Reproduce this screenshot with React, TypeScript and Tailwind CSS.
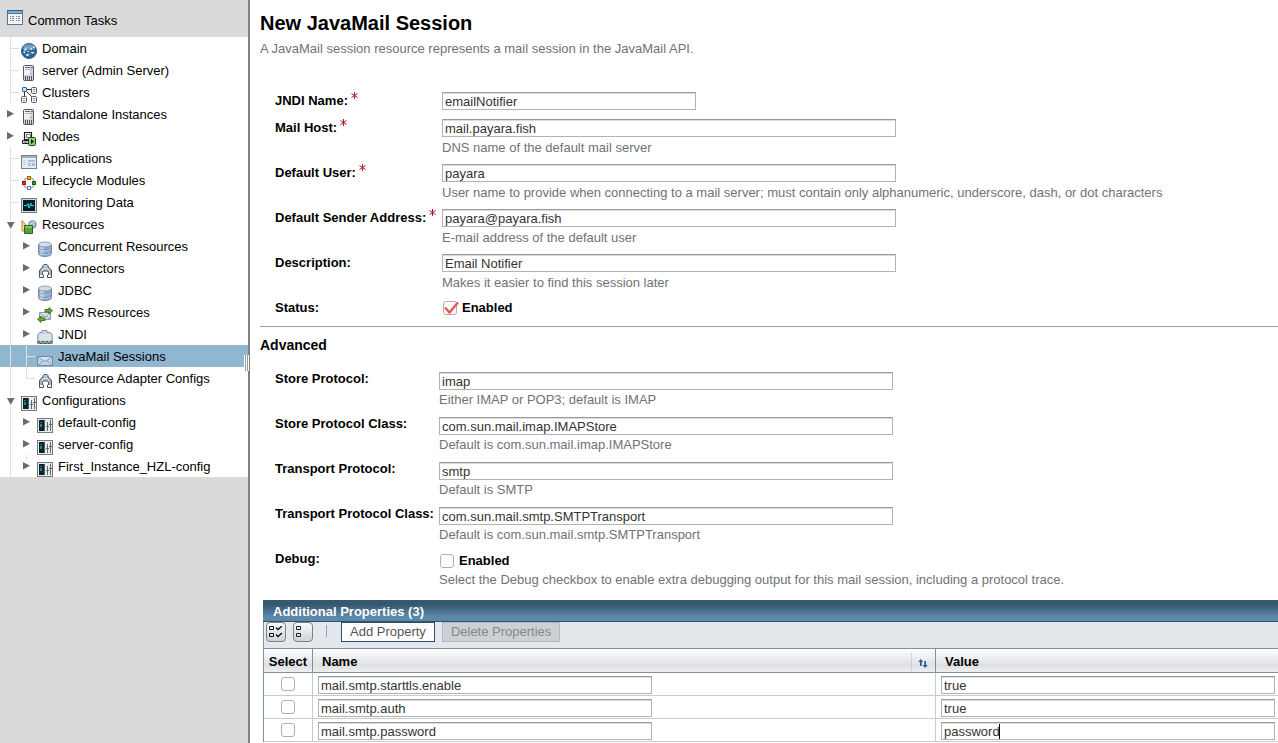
import React, { useState } from "react";

type IconName =
  | "globe" | "server" | "cluster" | "node" | "app" | "lifecycle" | "monitor"
  | "resources" | "database" | "connector" | "jms" | "jndi" | "mail" | "config";

function Icon({ name }: { name: IconName }) {
  return (
    <svg viewBox="0 0 16 16" className="size-4 shrink-0 self-end" aria-hidden="true">
      {name === "globe" && (
        <g>
          <circle cx="8" cy="8" r="7.600" fill="#2c6796" stroke="#234f74" strokeWidth=".8" />
          <path d="M1.500 6a6.800 6.800 0 0 1 13 0Q8 8 1.500 6Z" fill="#6c9cc2" />
          <path d="M5 4l5 1 2-2M5 4l-2 5 3 3 5-3 3 1" stroke="#8db6d4" strokeWidth=".6" fill="none" />
          <path d="M3.500 5.500h2v2h-2zM9.500 5H11v1.500H9.500zM2.500 8.500H4V10H2.500zM5.500 11h2v2h-2zM10.500 9h2v1.500h-2zM12 3.500h1.500V5H12zM6.500 8H8v1H6.500z" fill="#f1f7fb" />
        </g>
      )}
      {name === "server" && (
        <g>
          <rect x="2.500" y=".5" width="10" height="15" rx="1" fill="#d2d5d8" stroke="#53585d" />
          <g shapeRendering="crispEdges">
            <path d="M3 1h6v9H3z" fill="#f0f1f2" />
            <path d="M4 2h5v1H4z" fill="#5c5f63" />
            <path d="M10 2h2v1h-2z" fill="#3a78bb" />
            <path d="M4 4h7v1H4z" fill="#b1b4b7" />
            <path d="M4 11h1v4H4zM6 11h1v4H6zM8 11h1v4H8zM10 11h1v4h-1z" fill="#54585c" />
            <path d="M9 8h2v1H9z" fill="#9b9fa3" />
          </g>
        </g>
      )}
      {name === "cluster" && (
        <g>
          <path d="M5 2.500h6M3.500 4v6M5 4l6 6" stroke="#333" fill="none" />
          <rect x="1.500" y=".5" width="4" height="4" rx=".5" fill="#cfe3f6" stroke="#2b6ba6" />
          <rect x="10.500" y=".5" width="5" height="6" rx="1" fill="#eef0f2" stroke="#555b60" />
          <rect x=".5" y="9.500" width="5" height="6" rx="1" fill="#eef0f2" stroke="#555b60" />
          <rect x="10.500" y="9.500" width="5" height="6" rx="1" fill="#eef0f2" stroke="#555b60" />
          <path d="M12 2.500h2M2 11.500h2M12 11.500h2" stroke="#5e92c4" />
          <path d="M12 4.500h2M2 13.500h2M12 13.500h2" stroke="#a6adb3" />
        </g>
      )}
      {name === "node" && (
        <g>
          <path d="M3.500 1.500h7v7h-7z" fill="#f4f3f8" stroke="#1c1c22" strokeWidth="1.200" />
          <path d="M5.500 3.500h4v3h-4z" fill="#fff" stroke="#77738c" />
          <path d="M1.500 9.500h9v3h-9z" fill="#d7d0e3" stroke="#1c1c22" />
          <path d="M3 11h3" stroke="#8064a8" />
          <rect x="7.500" y="6.500" width="7" height="8" rx="1" fill="#8ed06f" stroke="#174f13" />
          <path d="M10 8v5l3-2.500z" fill="#101c10" />
        </g>
      )}
      {name === "app" && (
        <g shapeRendering="crispEdges">
          <path d="M0 2h16v14H0z" fill="#71808f" />
          <path d="M1 5h14v10H1z" fill="#e6ecf1" />
          <path d="M1 3h14v2H1z" fill="#9fb3c6" />
          <path d="M2 7h3v1H2zM2 9h3v1H2zM2 11h3v1H2z" fill="#c1cedb" />
          <path d="M7 7h7v2H7zM7 10h3v3H7zM11 10h3v3h-3z" fill="#a9bdd0" />
          <path d="M8 11h1v1H8z" fill="#e5edf4" />
        </g>
      )}
      {name === "lifecycle" && (
        <g>
          <circle cx="8" cy="8" r="5.500" fill="none" stroke="#7f92a3" strokeWidth="1.200" />
          <circle cx="8" cy="8" r="4.700" fill="none" stroke="#dfe6ec" strokeWidth=".6" />
          <g shapeRendering="crispEdges">
            <path d="M6 1h4v4H6z" fill="#a46508" /><path d="M7 2h2v2H7z" fill="#ffb52c" />
            <path d="M1 6h4v4H1z" fill="#a31515" /><path d="M2 7h2v2H2z" fill="#e03232" />
            <path d="M11 6h4v4h-4z" fill="#176519" /><path d="M12 7h2v2h-2z" fill="#3a9a32" />
            <path d="M6 11h4v4H6z" fill="#5b86ab" /><path d="M7 12h2v2H7z" fill="#e5f0f8" />
          </g>
        </g>
      )}
      {name === "monitor" && (
        <g>
          <path d="M.5 1.500h15v14H.5z" fill="#d5dadf" stroke="#70777e" />
          <path d="M2 3h12v11H2z" fill="#0a1e25" />
          <path d="M3 8.500h3l1-2 1 4.500 2-5v2.500h3" stroke="#2ee0e6" fill="none" />
        </g>
      )}
      {name === "resources" && (
        <g>
          <path d="M1 1.500v10.500h9z" fill="#fbd98a" stroke="#c8892a" />
          <circle cx="11.500" cy="5.500" r="3.800" fill="#a9bed5" stroke="#70859d" />
          <path d="M9.500 4.500q2-2 4-1" stroke="#e2ecf5" fill="none" />
          <path d="M3.500 6.500h8v8h-8z" fill="#56a436" stroke="#28651b" />
          <path d="M4 7h7v2H4z" fill="#86c762" />
        </g>
      )}
      {name === "database" && (
        <g>
          <path d="M1.500 3.500v9c0 4 13 4 13 0v-9" fill="#8da9cf" stroke="#68778e" strokeWidth=".8" />
          <path d="M3 5v9h4V5z" fill="#bccde6" />
          <ellipse cx="8" cy="3.500" rx="6.500" ry="2.500" fill="#d2dcea" stroke="#7f8b9d" strokeWidth=".8" />
          <path d="M1.500 7c1 3 12 3 13 0M1.500 10.500c1 3 12 3 13 0" fill="none" stroke="#5a7198" strokeWidth=".8" />
          <path d="M2 8c2 2.500 10 2.500 12 0M2 11.500c2 2.500 10 2.500 12 0" fill="none" stroke="#d6e1f0" strokeWidth=".7" />
        </g>
      )}
      {name === "connector" && (
        <g>
          <path d="M6 4V2.500l1-1h3l1 1V4l2.500 2 1 2v6.500h-4V12h1V9.500L10.500 8h-4L5.500 9.500V12h1v2.500h-4V8l1-2z" fill="#aab5c1" stroke="#4a5560" />
          <path d="M7 3h3M4.500 7.500L7 5.500h3l2.500 2" fill="none" stroke="#e5eaef" />
          <path d="M3 12h3v2H3zM11 12h3v2h-3z" fill="#f2f5f8" />
        </g>
      )}
      {name === "jms" && (
        <g>
          <path d="M2.500 5.500h11v7h-11z" fill="#d7e2ed" stroke="#8a9baa" />
          <path d="M3 6l5 4 5-4M3 12l4-3M13 12L9 9" fill="none" stroke="#7f93a7" strokeWidth=".8" />
          <path d="M8 2.500h4V.5L15.500 3.700 12 7V5H8z" fill="#66b02a" stroke="#285d0c" strokeWidth=".8" />
          <path d="M8 11H4V9L.5 12.300 4 15.500V13.500h4z" fill="#66b02a" stroke="#285d0c" strokeWidth=".8" />
        </g>
      )}
      {name === "jndi" && (
        <g>
          <path d="M.8 14.500V5.500L3 3.500h2v-2h5v2h3l2.200 2v9z" fill="#cad6e0" stroke="#8a959f" />
          <path d="M2 5h12v6H2z" fill="#d9e3eb" />
          <path d="M1 14.500v-2h2v2h2v-2h2v2h2v-2h2v2h2v-2h2v2" fill="none" stroke="#4a535c" />
        </g>
      )}
      {name === "mail" && (
        <g>
          <path d="M.5 5.500h15v9H.5z" fill="#bdd4e7" stroke="#7188a0" />
          <path d="M2 6h12l-6 4z" fill="#d4e4f1" />
          <path d="M1 6l7 4.500L15 6M1 14l5-4M15 14l-5-4" fill="none" stroke="#7b93aa" strokeWidth=".8" />
        </g>
      )}
      {name === "config" && (
        <g shapeRendering="crispEdges">
          <path d="M0 1h16v15H0z" fill="#737980" /><path d="M1 2h14v13H1z" fill="#e9ecef" />
          <path d="M2 3h6v11H2z" fill="#0b2329" />
          <path d="M3 5h2v1H3zM3 7h2v3H3z" fill="#138a83" /><path d="M7 3h1v11H7z" fill="#4a5d65" />
          <path d="M10 5h1v9h-1zM13 3h1v11h-1zM9 9h3v1H9zM12 7h3v1h-3z" fill="#5f686f" />
        </g>
      )}
    </svg>
  );
}

type Gutter = "tee" | "elbow" | "closed" | "closedEnd" | "open";

function TreeGutter({ kind }: { kind: Gutter }) {
  return (
    <svg viewBox="0 0 21 22" className="h-[22px] w-[21px] shrink-0" aria-hidden="true">
      <g fill="#dfdfdf" shapeRendering="crispEdges">
        {kind === "tee" && <path d="M10 0h1v11h8v1h-8v10h-1z" />}
        {kind === "elbow" && <path d="M10 0h1v11h8v1h-9z" />}
        {kind === "open" && <path d="M10 0h1v7h-1zM10 17h1v5h-1z" />}
        {kind === "closedEnd" && <path d="M10 0h1v5h-1z" />}
      </g>
      {(kind === "closed" || kind === "closedEnd") && <path d="M7 7v7.500l7-3.700z" fill="#6b6b6b" />}
      {kind === "open" && <path d="M7 9h7.500l-3.700 7z" fill="#6b6b6b" />}
    </svg>
  );
}

interface Node { label: string; icon: IconName; gutter: Gutter; child?: boolean; active?: boolean }

const nodes: Node[] = [
  { label: "Domain", icon: "globe", gutter: "tee" },
  { label: "server (Admin Server)", icon: "server", gutter: "tee" },
  { label: "Clusters", icon: "cluster", gutter: "tee" },
  { label: "Standalone Instances", icon: "server", gutter: "closed" },
  { label: "Nodes", icon: "node", gutter: "closed" },
  { label: "Applications", icon: "app", gutter: "tee" },
  { label: "Lifecycle Modules", icon: "lifecycle", gutter: "tee" },
  { label: "Monitoring Data", icon: "monitor", gutter: "tee" },
  { label: "Resources", icon: "resources", gutter: "open" },
  { label: "Concurrent Resources", icon: "database", gutter: "closed", child: true },
  { label: "Connectors", icon: "connector", gutter: "closed", child: true },
  { label: "JDBC", icon: "database", gutter: "closed", child: true },
  { label: "JMS Resources", icon: "jms", gutter: "closed", child: true },
  { label: "JNDI", icon: "jndi", gutter: "closed", child: true },
  { label: "JavaMail Sessions", icon: "mail", gutter: "tee", child: true, active: true },
  { label: "Resource Adapter Configs", icon: "connector", gutter: "elbow", child: true },
  { label: "Configurations", icon: "config", gutter: "open" },
  { label: "default-config", icon: "config", gutter: "closed", child: true },
  { label: "server-config", icon: "config", gutter: "closed", child: true },
  { label: "First_Instance_HZL-config", icon: "config", gutter: "closedEnd", child: true },
];

function Sidebar() {
  return (
    <aside className="relative w-[250px] shrink-0 border-r-2 border-[#808080] bg-[#dadada]">
      <a href="#tasks" className="flex h-[37px] items-center gap-[5px] pl-[7px] pt-1">
        <svg viewBox="0 0 16 15" className="mt-[6px] h-[15px] w-4 self-start" shapeRendering="crispEdges" aria-hidden="true">
          <path d="M0 0h16v15H0z" fill="#567594" /><path d="M1 4h14v10H1z" fill="#f0f4f7" />
          <path d="M0 0h16v1H0z" fill="#255f91" /><path d="M1 1h14v2H1z" fill="#7ab3da" />
          <path d="M3 6h1v1H3zM5 6h2v1H5zM9 6h1v1H9zM11 6h2v1h-2zM3 8h1v1H3zM5 8h2v1H5zM9 8h1v1H9zM11 8h2v1h-2zM3 10h1v1H3zM5 10h2v1H5zM9 10h1v1H9zM11 10h2v1h-2z" fill="#7c8791" />
        </svg>
        Common Tasks
      </a>
      <nav className="bg-white" aria-label="Tree">
        <ul>
          {nodes.map((n) => (
            <li key={n.label}>
              <a href="#node" className={`flex h-[22px] whitespace-nowrap ${n.active ? "bg-[#90b6d0]" : ""}`}>
                {n.child && <span className="w-4 shrink-0 pl-[10px]"><span className="block h-full w-px bg-[#dfdfdf]" /></span>}
                <TreeGutter kind={n.gutter} />
                <Icon name={n.icon} />
                <span className="pl-[5px] leading-6">{n.label}</span>
              </a>
            </li>
          ))}
        </ul>
      </nav>
      <svg viewBox="0 0 5 16" className="absolute -right-px top-[355px] h-4 w-[5px]" shapeRendering="crispEdges" aria-hidden="true">
        <path d="M0 0h5v16H0z" fill="#999" /><path d="M0 0h1v16H0zM2 0h1v16H2zM4 0h1v16H4z" fill="#fff" />
      </svg>
    </aside>
  );
}

const inputClass =
  "block h-[18px] max-w-full border border-[#b3b3b3] border-t-[#999] bg-white px-[2px] text-[#333] shadow-[inset_0_1px_0_#dcdcdc] outline-none";

function Check({ id, label, initial = false }: { id: string; label: string; initial?: boolean }) {
  const [on, setOn] = useState(initial);
  return (
    <span className="relative block size-[14px] shrink-0">
      <input id={id} type="checkbox" aria-label={label} checked={on} onChange={() => setOn(!on)}
        className="block size-[14px] appearance-none rounded-[3px] border border-[#b0b0b0] bg-white" />
      {on && (
        <svg viewBox="0 0 16 14" className="pointer-events-none absolute left-0 top-0 h-[14px] w-4" aria-hidden="true">
          <path d="M2 6.500l4.500 5L15 1.500" fill="none" stroke="#f3524b" strokeWidth="2.300" />
        </svg>
      )}
    </span>
  );
}

function Required() {
  return (
    <svg viewBox="0 0 7 7" className="ml-[3px] size-[7px]" role="img" aria-label="Required">
      <path d="M3.500 0v7M.5 1.500l6 4M6.500 1.500l-6 4" stroke="#b3131b" fill="none" />
    </svg>
  );
}

const layouts = {
  general: { cols: "grid-cols-[167px_minmax(0,1fr)]", label: "leading-[18px]", help: "mt-[3px]" },
  advanced: { cols: "grid-cols-[164px_minmax(0,1fr)]", label: "leading-[14px]", help: "mt-[2px]" },
};

function Row({ id, label, layout, help, required, children }: {
  id: string; label: string; layout: keyof typeof layouts; help?: string; required?: boolean; children: React.ReactNode;
}) {
  const l = layouts[layout];
  return (
    <div className={`grid ${l.cols} ${help ? "min-h-[45px]" : "min-h-[27px]"}`}>
      <label htmlFor={id} className={`flex h-[18px] whitespace-nowrap font-bold text-black ${l.label}`}>
        {label}{required && <Required />}
      </label>
      <div className="min-w-0">
        {children}
        {help && <p className={`leading-4 text-[#6f7278] ${l.help}`}>{help}</p>}
      </div>
    </div>
  );
}

const general = [
  { id: "jndi", label: "JNDI Name:", value: "emailNotifier", width: "w-[254px]", required: true },
  { id: "host", label: "Mail Host:", value: "mail.payara.fish", width: "w-[454px]", required: true, help: "DNS name of the default mail server" },
  { id: "user", label: "Default User:", value: "payara", width: "w-[454px]", required: true, help: "User name to provide when connecting to a mail server; must contain only alphanumeric, underscore, dash, or dot characters" },
  { id: "from", label: "Default Sender Address:", value: "payara@payara.fish", width: "w-[454px]", required: true, help: "E-mail address of the default user" },
  { id: "desc", label: "Description:", value: "Email Notifier", width: "w-[454px]", help: "Makes it easier to find this session later" },
];

const advanced = [
  { id: "store", label: "Store Protocol:", value: "imap", help: "Either IMAP or POP3; default is IMAP" },
  { id: "storeClass", label: "Store Protocol Class:", value: "com.sun.mail.imap.IMAPStore", help: "Default is com.sun.mail.imap.IMAPStore" },
  { id: "transport", label: "Transport Protocol:", value: "smtp", help: "Default is SMTP" },
  { id: "transportClass", label: "Transport Protocol Class:", value: "com.sun.mail.smtp.SMTPTransport", help: "Default is com.sun.mail.smtp.SMTPTransport" },
];

const properties = [
  { name: "mail.smtp.starttls.enable", value: "true" },
  { name: "mail.smtp.auth", value: "true" },
  { name: "mail.smtp.password", value: "password", caret: true },
];

const iconButton = "flex h-5 w-5 items-center justify-center rounded-[4px] border border-[#7c7f83] bg-linear-to-b from-[#fafafa] to-[#cfd2d6]";

function PropertiesTable() {
  return (
    <section className="ml-[3px] border-l border-[#7d939f]">
      <h2 className="-ml-px h-[22px] border-b border-[#2f556c] bg-linear-to-b from-[#34586f] from-20% to-[#5c89a8] to-80% pl-[10px] font-bold leading-6 text-white">
        Additional Properties (3)
      </h2>
      <div className="flex h-[26px] bg-[#e4e8ec] pl-[2px]">
        <button type="button" aria-label="Select all" className={iconButton}>
          <svg viewBox="0 0 14 12" className="h-3 w-[14px]" fill="none" stroke="#111">
            <path d="M.5.500h4v3h-4zM.5 7.500h4v3h-4z" /><path d="M7 1.500l2 2L13 0M7 8.500l2 2L13 7" strokeWidth="1.400" />
          </svg>
        </button>
        <button type="button" aria-label="Deselect all" className={`${iconButton} ml-[7px]`}>
          <svg viewBox="0 0 14 12" className="h-3 w-[14px]" fill="none" stroke="#222">
            <path d="M.5.500h4v3h-4zM.5 7.500h4v3h-4z" />
          </svg>
        </button>
        <span className="ml-[13px] mt-[3px] h-3 w-px bg-[#9a9fa5]" />
        <button type="button" className="ml-[14px] h-5 border border-[#2c4f6e] bg-white px-2 leading-[18px] text-[#555]">Add Property</button>
        <button type="button" disabled className="ml-[7px] h-5 border border-[#b5b8bc] bg-[#cdd0d4] px-2 leading-[18px] text-[#84878b]">Delete Properties</button>
      </div>
      <table className="w-full table-fixed border-separate border-spacing-0">
        <colgroup><col className="w-[49px]" /><col /><col className="w-[342px]" /></colgroup>
        <thead>
          <tr className="h-[25px] bg-linear-to-b from-white via-[#dfe0e4] via-70% to-[#f0f1f3] text-left text-black">
            <th scope="col" className="border-y border-r border-[#7d939f] p-0 pt-[2px] text-center">Select</th>
            <th scope="col" className="border-y border-r border-[#7d939f] p-0">
              <div className="flex h-[23px] items-center justify-between pl-[9px]">
                <span className="pt-[2px]">Name</span>
                <button type="button" aria-label="Sort by name" className="mt-1 h-[19px] w-6 border-l border-[#d0d2d6] pl-[6px] pt-[2px]">
                  <svg viewBox="0 0 10 9" className="h-[9px] w-[10px]" fill="#23619e">
                    <path d="M2 7V3H.3L2.800 0l2.500 3H3.700v4zM6.300 2v4H4.500L7.200 9l2.600-3H8V2z" />
                  </svg>
                </button>
              </div>
            </th>
            <th scope="col" className="border-y border-[#7d939f] p-0 pl-[9px] pt-[2px]">Value</th>
          </tr>
        </thead>
        <tbody>
          {properties.map((p) => (
            <tr key={p.name} className="h-[23px] bg-white">
              <td className="border-b border-r border-[#c5cccf] p-0">
                <span className="flex justify-center"><Check id={`pick-${p.name}`} label={`Select ${p.name}`} /></span>
              </td>
              <td className="border-b border-r border-[#c5cccf] p-0 pl-[5px] pt-[2px]">
                <input type="text" aria-label="Property name" defaultValue={p.name} className={`${inputClass} w-[334px]`} />
              </td>
              <td className="border-b border-[#c5cccf] p-0 pl-[5px] pt-[2px]">
                <span className="relative block">
                  <input type="text" aria-label="Property value" defaultValue={p.value} className={`${inputClass} w-[334px]`} />
                  {p.caret && <span className="absolute left-[58px] top-[2px] h-[15px] w-px bg-black" />}
                </span>
              </td>
            </tr>
          ))}
        </tbody>
      </table>
    </section>
  );
}

export default function App() {
  return (
    <div className="flex min-h-screen bg-white font-['Liberation_Sans',Arial,sans-serif] text-[13px] leading-4 text-black">
      <Sidebar />
      <main className="min-w-0 flex-1 pl-[10px]">
        <h1 className="pt-3 text-[20px] font-bold leading-[23px]">New JavaMail Session</h1>
        <p className="mt-[6px] leading-4 text-[#6f7278]">A JavaMail session resource represents a mail session in the JavaMail API.</p>
        <form className="pl-[15px] pt-[35px]">
          {general.map((f) => (
            <Row key={f.id} id={f.id} label={f.label} layout="general" help={f.help} required={f.required}>
              <input id={f.id} type="text" defaultValue={f.value} className={`${inputClass} ${f.width}`} />
            </Row>
          ))}
          <Row id="status" label="Status:" layout="general">
            <div className="flex h-[18px] items-center gap-[5px] pl-px font-bold"><Check id="status" label="Status enabled" initial />Enabled</div>
          </Row>
        </form>
        <hr className="border-[#8fa3ad]" />
        <h2 className="mt-[10px] text-[14px] font-bold leading-4">Advanced</h2>
        <form className="pb-[3px] pl-[15px] pt-[19px]">
          {advanced.map((f) => (
            <Row key={f.id} id={f.id} label={f.label} layout="advanced" help={f.help}>
              <input id={f.id} type="text" defaultValue={f.value} className={`${inputClass} w-[454px]`} />
            </Row>
          ))}
          <Row id="debug" label="Debug:" layout="advanced" help="Select the Debug checkbox to enable extra debugging output for this mail session, including a protocol trace.">
            <div className="flex h-[18px] items-center gap-[5px] pl-px font-bold"><Check id="debug" label="Debug enabled" />Enabled</div>
          </Row>
        </form>
        <PropertiesTable />
      </main>
    </div>
  );
}
